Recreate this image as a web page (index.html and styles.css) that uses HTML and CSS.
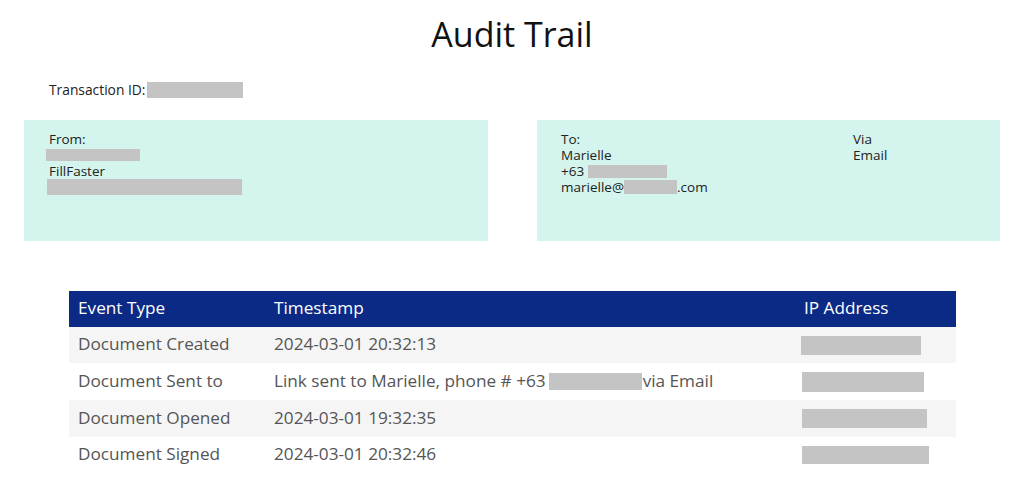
FILE: index.html
```html
<!DOCTYPE html>
<html>
<head>
<meta charset="utf-8">
<link rel="stylesheet" href="styles.css">
</head>
<body>
<div class="page">
  <h1 class="title">Audit Trail</h1>
  <div class="txn">Transaction ID:<span class="redact txn-redact"></span></div>
  <div class="parties">
    <div class="party from">
      <div class="line">From:</div>
      <div class="line"><span class="redact from-name"></span></div>
      <div class="line">FillFaster</div>
      <div class="line"><span class="redact from-addr"></span></div>
    </div>
    <div class="party to">
      <div class="to-col">
        <div class="line">To:</div>
        <div class="line">Marielle</div>
        <div class="line">+63 <span class="redact to-phone"></span></div>
        <div class="line">marielle@<span class="redact to-mail"></span>.com</div>
      </div>
      <div class="via-col">
        <div class="line">Via</div>
        <div class="line">Email</div>
      </div>
    </div>
  </div>
  <div class="table">
    <div class="row head">
      <div class="c1">Event Type</div>
      <div class="c2">Timestamp</div>
      <div class="c3">IP Address</div>
    </div>
    <div class="row shade h36">
      <div class="c1">Document Created</div>
      <div class="c2">2024-03-01 20:32:13</div>
      <div class="c3"><span class="redact ip ip1"></span></div>
    </div>
    <div class="row h37">
      <div class="c1">Document Sent to</div>
      <div class="c2">Link sent to Marielle, phone # +63 <span class="redact row-phone"></span>via Email</div>
      <div class="c3"><span class="redact ip ip2"></span></div>
    </div>
    <div class="row shade h37">
      <div class="c1">Document Opened</div>
      <div class="c2">2024-03-01 19:32:35</div>
      <div class="c3"><span class="redact ip ip3"></span></div>
    </div>
    <div class="row h36">
      <div class="c1">Document Signed</div>
      <div class="c2">2024-03-01 20:32:46</div>
      <div class="c3"><span class="redact ip ip4"></span></div>
    </div>
  </div>
</div>
</body>
</html>
```

FILE: styles.css
```css
* { box-sizing: border-box; }
html, body { margin: 0; padding: 0; background: #fff; }
body { font-family: "Open Sans", "Noto Sans", sans-serif; color: #222; }
.page { width: 1024px; height: 503px; overflow: hidden; }
.title {
  margin: 11px 0 0;
  font-size: 34px;
  font-weight: 400;
  line-height: 46px;
  text-align: center;
  color: #111;
}
.txn {
  margin-top: 25px;
  padding-left: 49px;
  font-size: 13.8px;
  line-height: 16px;
  height: 16px;
  display: flex;
  align-items: center;
}
.redact { display: inline-block; background: #c4c4c4; vertical-align: middle; }
.txn-redact { width: 96px; height: 16px; margin-left: 2px; }
.parties {
  margin-top: 22px;
  padding: 0 24px;
  display: flex;
  gap: 49px;
}
.party {
  height: 121px;
  background: #d4f4ee;
  font-size: 13.5px;
  line-height: 16px;
  color: #222;
  padding-top: 11px;
}
.line { height: 16px; white-space: nowrap; display: flex; align-items: center; }
.from { width: 464px; padding-left: 25px; }
.to { width: 463px; padding-left: 24px; display: flex; }
.to-col { width: 292px; }
.from-name { width: 94px; height: 12px; margin-left: -3px; }
.from-addr { width: 195px; height: 16px; margin-left: -2px; }
.to-phone { width: 79px; height: 13px; margin-left: 4px; }
.to-mail { width: 53px; height: 14px; }
.table {
  margin: 50px 0 0 69px;
  width: 887px;
}
.row { display: flex; align-items: center; font-size: 17.2px; color: #555; white-space: nowrap; }
.row .c1, .row .c2 .txt { position: relative; }
.row.head { height: 36px; background: #0a2a86; color: #fff; }
.row.shade { background: #f5f5f5; }
.h36 { height: 36px; }
.h37 { height: 37px; }
.c1 { width: 196px; padding-left: 9px; padding-bottom: 3px; }
.c2 { width: 530px; padding-left: 9px; padding-bottom: 3px; display: flex; align-items: center; }
.c3 { flex: 1; padding-left: 9px; display: flex; align-items: center; }
.head .c3 { padding-bottom: 3px; }
.row-phone { width: 93px; height: 17px; margin-left: 3px; margin-right: 1px; position: relative; top: 1px; }
.ip { height: 19px; margin-left: -3px; }
.ip1 { width: 120px; }
.ip2 { width: 122px; margin-left: -2px; height: 20px; }
.ip3 { width: 125px; margin-left: -2px; }
.ip4 { width: 127px; margin-left: -2px; height: 18px; }
```
